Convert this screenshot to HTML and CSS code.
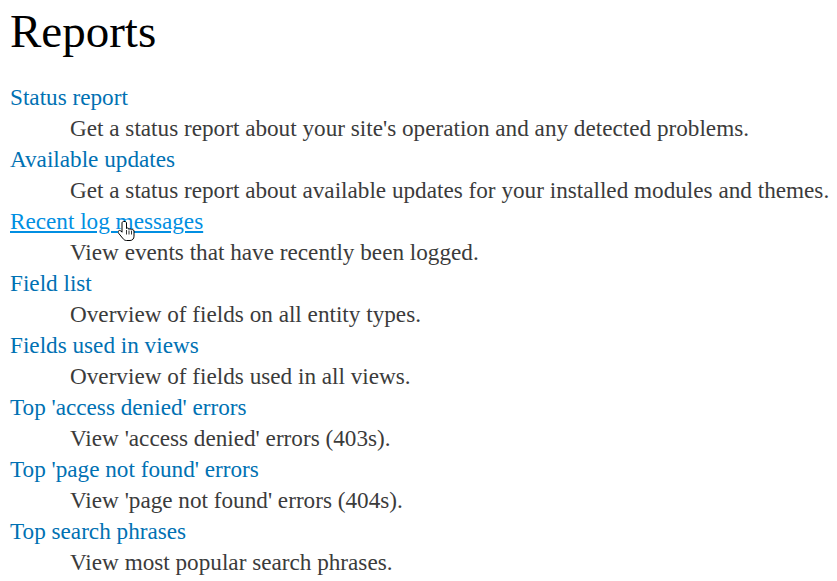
FILE: index.html
```html
<!DOCTYPE html>
<html>
<head>
<meta charset="utf-8">
<link rel="stylesheet" href="styles.css">
</head>
<body>
<main class="page">
  <h1 class="title">Reports</h1>
  <dl class="admin-list">
    <dt><a href="#">Status report</a></dt>
    <dd>Get a status report about your site's operation and any detected problems.</dd>
    <dt><a href="#">Available updates</a></dt>
    <dd>Get a status report about available updates for your installed modules and themes.</dd>
    <dt class="hover-row"><a href="#" class="hovered">Recent log messages</a><svg class="cursor" width="18" height="22" viewBox="0 0 18 22"><path d="M5.5 1.5c-.8 0-1.5.7-1.5 1.5v9.2l-1.2-1.3c-.7-.7-1.7-.7-2.3 0-.6.6-.6 1.5 0 2.2l4.3 5.3c.9 1.1 1.9 2.1 3.7 2.1h3.5c2.5 0 4-1.9 4-4.3v-5.2c0-.8-.6-1.4-1.4-1.4-.5 0-.9.2-1.1.6 0-.8-.6-1.4-1.4-1.4-.5 0-.9.2-1.1.6 0-.8-.6-1.4-1.4-1.4-.4 0-.8.2-1.1.5V3c0-.8-.7-1.5-1.5-1.5z" fill="#fff" stroke="#000" stroke-width="1"/><path d="M8.5 10v4.5M11 10.5v4M13.5 11v3.5" stroke="#000" stroke-width="0.8"/></svg></dt>
    <dd>View events that have recently been logged.</dd>
    <dt><a href="#">Field list</a></dt>
    <dd>Overview of fields on all entity types.</dd>
    <dt><a href="#">Fields used in views</a></dt>
    <dd>Overview of fields used in all views.</dd>
    <dt><a href="#">Top 'access denied' errors</a></dt>
    <dd>View 'access denied' errors (403s).</dd>
    <dt><a href="#">Top 'page not found' errors</a></dt>
    <dd>View 'page not found' errors (404s).</dd>
    <dt><a href="#">Top search phrases</a></dt>
    <dd>View most popular search phrases.</dd>
  </dl>
</main>
</body>
</html>
```
FILE: styles.css
```css
html, body {
  margin: 0;
  padding: 0;
  background: #fff;
}
.page {
  padding: 0 0 0 10px;
  font-family: "Liberation Serif", "Times New Roman", serif;
  color: #3b3b3b;
}
.title {
  margin: 0;
  padding-top: 6px;
  font-size: 47px;
  line-height: 50px;
  font-weight: normal;
  color: #000;
}
.admin-list {
  margin: 26px 0 0;
  font-size: 23.2px;
  line-height: 31px;
}
.admin-list dt {
  margin: 0;
  white-space: nowrap;
}
.admin-list dd {
  margin: 0 0 0 60px;
  white-space: nowrap;
}
.admin-list a {
  color: #0071b3;
  text-decoration: none;
}
.admin-list a.hovered {
  color: #018fe2;
  text-decoration: underline;
}
.hover-row {
  position: relative;
}
.cursor {
  position: absolute;
  left: 108px;
  top: 14px;
}
```
